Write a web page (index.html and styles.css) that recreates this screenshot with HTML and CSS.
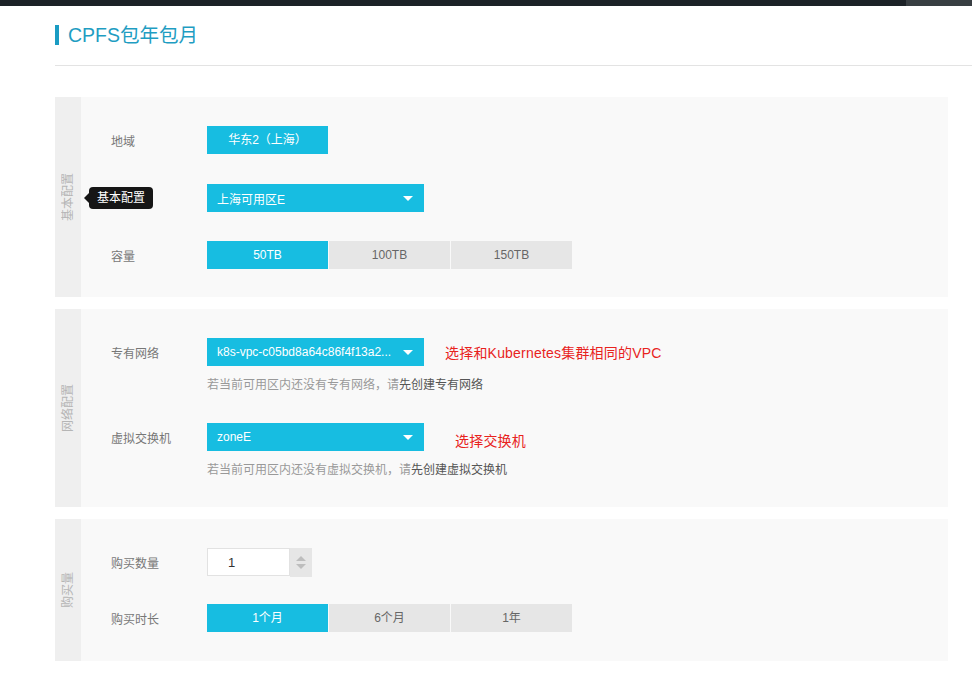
FILE: index.html
```html
<!DOCTYPE html>
<html lang="zh">
<head>
<meta charset="utf-8">
<title>CPFS包年包月</title>
<link rel="stylesheet" href="styles.css">
</head>
<body>
<div class="topbar"><div class="topbar-fill"></div><div class="topbar-end"></div></div>
<div class="page">
  <div class="title-row">
    <h1 class="title">CPFS包年包月</h1>
  </div>

  <section class="panel panel-basic">
    <div class="side"><span class="side-text">基本配置</span><div class="tip">基本配置</div></div>
    <div class="body">
      <div class="row">
        <div class="label">地域</div>
        <div class="opts"><span class="opt on">华东2（上海）</span></div>
      </div>
      <div class="row r2">
        <div class="label"></div>
        <div class="select"><span class="select-text">上海可用区E</span><span class="caret"></span></div>
      </div>
      <div class="row r3">
        <div class="label">容量</div>
        <div class="opts"><span class="opt on">50TB</span><span class="opt">100TB</span><span class="opt">150TB</span></div>
      </div>
    </div>
  </section>

  <section class="panel panel-net">
    <div class="side"><span class="side-text">网络配置</span></div>
    <div class="body">
      <div class="row">
        <div class="label">专有网络</div>
        <div class="select"><span class="select-text">k8s-vpc-c05bd8a64c86f4f13a2...</span><span class="caret"></span></div>
        <span class="note note1">选择和Kubernetes集群相同的VPC</span>
      </div>
      <p class="help">若当前可用区内还没有专有网络，请<span class="link">先创建专有网络</span></p>
      <div class="row r-gap">
        <div class="label">虚拟交换机</div>
        <div class="select"><span class="select-text">zoneE</span><span class="caret"></span></div>
        <span class="note note2">选择交换机</span>
      </div>
      <p class="help">若当前可用区内还没有虚拟交换机，请<span class="link">先创建虚拟交换机</span></p>
    </div>
  </section>

  <section class="panel panel-buy">
    <div class="side"><span class="side-text">购买量</span></div>
    <div class="body">
      <div class="row">
        <div class="label">购买数量</div>
        <div class="num"><span class="num-val">1</span></div>
        <div class="spin"><span class="up"></span><span class="down"></span></div>
      </div>
      <div class="row r-buy2">
        <div class="label">购买时长</div>
        <div class="opts"><span class="opt on">1个月</span><span class="opt">6个月</span><span class="opt">1年</span></div>
      </div>
    </div>
  </section>
</div>
</body>
</html>
```

FILE: styles.css
```css
* { box-sizing: border-box; }
html, body { margin: 0; padding: 0; background: #fff; }
body {
  font-family: "Liberation Sans", "Noto Sans CJK SC", sans-serif;
  font-size: 12px;
  color: #666;
  width: 972px;
  height: 681px;
  overflow: hidden;
}
.topbar { display: flex; height: 6px; }
.topbar-fill { flex: 1; background: #1c2227; }
.topbar-end { width: 66px; background: #383e42; }

.page { padding-left: 55px; }
.title-row {
  height: 60px;
  border-bottom: 1px solid #e3e3e3;
  display: flex;
  align-items: center;
  padding-bottom: 1px;
}
.title {
  margin: 0;
  font-weight: normal;
  font-size: 19.5px;
  line-height: 20px;
  color: #1f9dc2;
  border-left: 4px solid #1a9cc3;
  padding-left: 9px;
}

.panel {
  width: 893px;
  display: flex;
  background: #f9f9f9;
  margin-top: 12px;
}
.panel-basic { margin-top: 31px; height: 200px; }
.panel-net { height: 198px; }
.panel-buy { height: 142px; }

.side {
  width: 26px;
  background: #efefef;
  display: flex;
  align-items: center;
  justify-content: center;
  position: relative;
}
.side-text {
  writing-mode: vertical-rl;
  text-orientation: sideways;
  transform: rotate(180deg);
  color: #b5b5b5;
  font-size: 12px;
  line-height: 14px;
}
.tip {
  position: absolute;
  left: 34px;
  top: 90px;
  height: 22px;
  line-height: 22px;
  padding: 0 8px;
  background: #161616;
  color: #fff;
  border-radius: 4px;
  white-space: nowrap;
  font-size: 12px;
}
.tip::before {
  content: "";
  position: absolute;
  left: -5px;
  top: 6px;
  border-top: 5px solid transparent;
  border-bottom: 5px solid transparent;
  border-right: 5px solid #161616;
}

.body { flex: 1; padding: 29px 0 0 30px; }
.row { display: flex; align-items: center; height: 28px; }
.r2 { margin-top: 30px; }
.r3 { margin-top: 29px; }
.r-gap { margin-top: 29px; }
.r-buy2 { margin-top: 28px; }
.label { width: 96px; color: #777; font-size: 12px; }

.opts { display: flex; gap: 1px; }
.opt {
  width: 121px;
  height: 28px;
  line-height: 28px;
  text-align: center;
  background: #e6e6e6;
  color: #666;
  font-size: 12px;
}
.opt.on { background: #17bde1; color: #fff; }

.select {
  width: 217px;
  height: 28px;
  background: #17bde1;
  color: #fff;
  display: flex;
  align-items: center;
  justify-content: space-between;
  padding: 0 11px 0 10px;
  font-size: 12px;
}
.caret {
  width: 0; height: 0;
  border-left: 5px solid transparent;
  border-right: 5px solid transparent;
  border-top: 5px solid #fff;
}

.note { color: #e8231d; font-size: 14px; line-height: 16px; letter-spacing: 0.2px; }
.note1 { margin-left: 21px; margin-top: 2px; }
.note2 { margin-left: 31px; margin-top: 8px; }

.help {
  margin: 10px 0 0 96px;
  line-height: 18px;
  font-size: 12px;
  color: #999;
}
.help .link { color: #555; }

.num {
  width: 83px;
  height: 28px;
  background: #fff;
  border: 1px solid #e2e2e2;
  display: flex;
  align-items: center;
  padding-left: 20px;
  color: #333;
  font-size: 13px;
}
.spin {
  width: 22px;
  height: 29px;
  background: #e6e6e6;
  display: flex;
  flex-direction: column;
  align-items: center;
  justify-content: center;
  gap: 3px;
  margin-top: 1px;
}
.up, .down { width: 0; height: 0; border-left: 5px solid transparent; border-right: 5px solid transparent; }
.up { border-bottom: 5px solid #bdbdbd; }
.down { border-top: 5px solid #bdbdbd; }
```
